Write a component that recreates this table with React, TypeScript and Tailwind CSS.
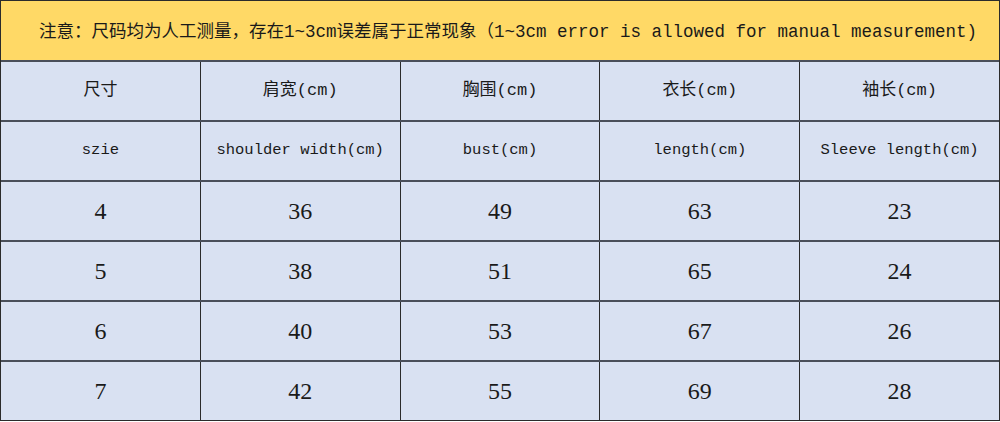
import React from "react";

const headerCn = ["尺寸", "肩宽(cm)", "胸围(cm)", "衣长(cm)", "袖长(cm)"];
const headerEn = ["szie", "shoulder width(cm)", "bust(cm)", "length(cm)", "Sleeve length(cm)"];

const sizeRows = [
  ["4", "36", "49", "63", "23"],
  ["5", "38", "51", "65", "24"],
  ["6", "40", "53", "67", "26"],
  ["7", "42", "55", "69", "28"],
];

const mono = "font-['Liberation_Mono','Noto_Sans_CJK_SC',monospace]";

const Row = ({ cells, cellClass }: { cells: string[]; cellClass: string }) => (
  <div className="flex h-[60px] border-t-2 border-[#4a4f5a]">
    {cells.map((c, i) => (
      <div
        key={i}
        className={`flex flex-1 items-center justify-center ${
          i < cells.length - 1 ? "border-r border-[#2b2b2b]" : ""
        } ${cellClass}`}
      >
        {c}
      </div>
    ))}
  </div>
);

const App = () => {
  return (
    <div className="w-[1000px] h-[422px] bg-white overflow-hidden">
      <div className="border border-[#2b2b2b] bg-[#d9e1f2] text-[#1a1a1a]">
        {/* notice banner */}
        <div
          className={`flex h-[59px] items-center justify-center bg-[#ffd966] pl-[16px] pt-[3px] text-[17.5px] ${mono}`}
        >
          注意：尺码均为人工测量，存在1~3cm误差属于正常现象（1~3cm error is allowed for manual measurement)
        </div>

        <Row cells={headerCn} cellClass={`text-[17px] ${mono}`} />
        <Row cells={headerEn} cellClass={`text-[15.5px] ${mono}`} />
        {sizeRows.map((r) => (
          <Row
            key={r[0]}
            cells={r}
            cellClass="text-[24px] font-['Liberation_Serif',serif]"
          />
        ))}
      </div>
    </div>
  );
};

export default App;
